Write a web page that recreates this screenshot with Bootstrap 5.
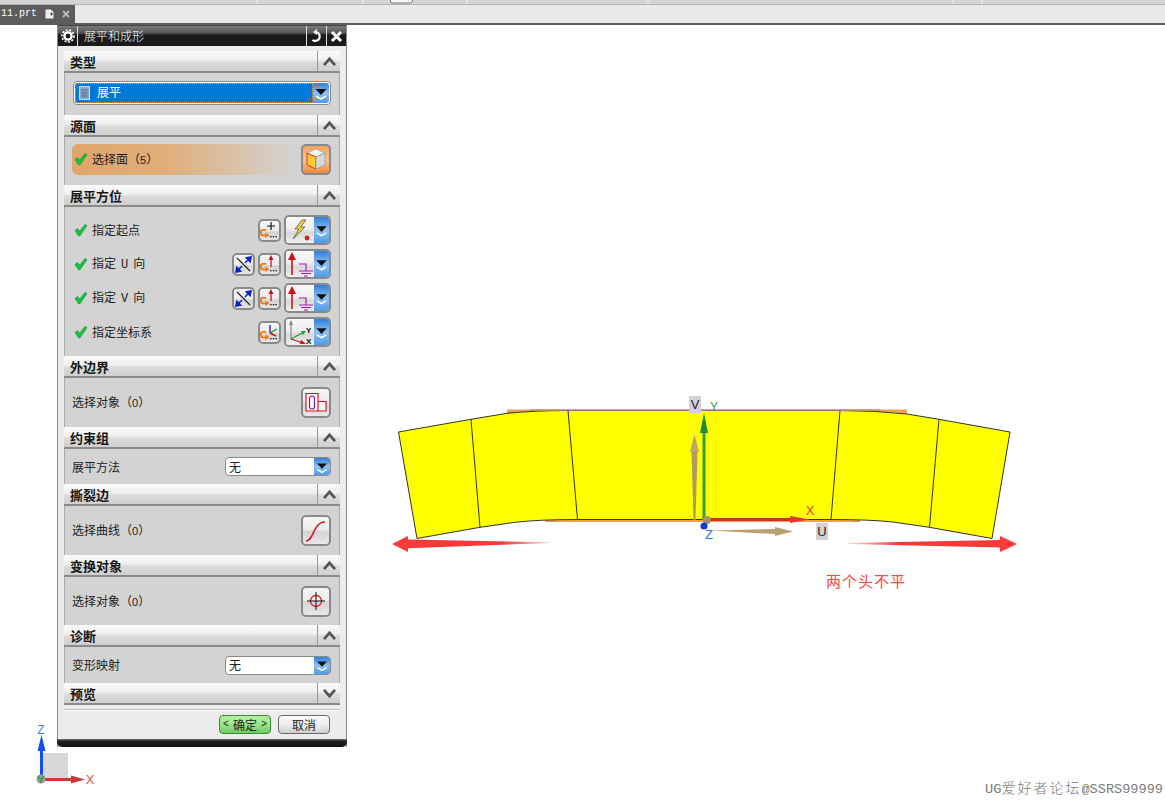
<!DOCTYPE html>
<html lang="zh-CN">
<head>
<meta charset="UTF-8">
<meta name="viewport" content="width=device-width, initial-scale=1.0">
<title>展平和成形</title>
<link href="https://cdn.jsdelivr.net/npm/bootstrap@5.3.3/dist/css/bootstrap.min.css" rel="stylesheet">
<style>
html, body { height: 801px; overflow: hidden; }
body { background: #fff; font-family: "Noto Sans CJK SC", "Liberation Sans", sans-serif; font-size: 12px; line-height: 1; color: #222; position: relative; }
.asc { font-family: "Liberation Mono", monospace; font-size: 10px; }
.asc-axis { font-family: "Liberation Mono", monospace; font-size: 12px; margin: 0 5px; }
.dig { font-family: "Liberation Sans", sans-serif; font-size: 11px; }

/* top strip and file tab */
.top-strip { height: 5px; background: #d4d4d4; border-bottom: 1px solid #b4b4b4; }
.top-strip svg { display: block; }
.tab-bar { height: 20px; background: #e9e9e9; border-bottom: 2px solid #5c5c5c; }
.file-tab { width: 75px; height: 18px; background: #5c5c5c; color: #fff; font-family: "Liberation Mono", monospace; font-size: 10px; padding-left: 1px; }

/* model canvas */
.model-view { position: absolute; left: 0; top: 0; width: 1165px; height: 801px; }
.watermark { position: absolute; right: 2px; bottom: 4px; color: #7a7a7a; font-family: "Liberation Mono", monospace; font-size: 13.6px; }
.watermark span { font-family: "Noto Sans CJK SC", sans-serif; font-size: 14px; letter-spacing: 2px; font-weight: 300; }

/* dialog */
.ug-dialog { position: absolute; left: 57px; top: 25px; width: 290px; height: 722px; background: #ececec; border-left: 1px solid #8c8c8c; border-right: 1px solid #8c8c8c; }
.ug-title { height: 21px; background: linear-gradient(#7a7a7a 0, #555 35%, #1a1a1a 45%, #1a1a1a 100%); color: #fff; border-top: 1px solid #444; }
.ug-title-text { padding-left: 6px; font-size: 12px; font-weight: 300; }
.ug-tb { width: 20px; height: 20px; border-right: 1px solid #ddd; }
.ug-tb-r { border-left: 1px solid #ddd; border-right: 0; }
.ug-sections { padding: 5px 6px 0 6px; }
.sec-head { height: 22px; background: linear-gradient(#fafafa 0, #f0f0f0 45%, #dcdcdc 55%, #cfcfcf 100%); border-bottom: 2px solid #8a8a8a; font-size: 13px; font-weight: 700; color: #161616; padding-left: 6px; }
.sec-arrow { width: 23px; height: 20px; border-left: 1px solid #999; }
.sec-body { background: #d3d3d3; border-left: 1px solid #aaa; border-right: 1px solid #aaa; padding: 0 8px 0 7px; }
.h-42 { height: 42px; } .h-48 { height: 48px; } .h-49 { height: 49px; } .h-35 { height: 35px; } .h-36 { height: 36px; } .h-149 { height: 149px; }
.sec-stack { padding-top: 8px; padding-left: 9px; }
.ori-row { height: 34px; padding-bottom: 4px; }
.ori-label { padding-left: 4px; }

/* combos and tool buttons */
.combo-type { width: 258px; height: 24px; margin: 0 0 2px 1px; background: #fff; border: 1px solid #8a8a8a; border-radius: 4px; padding: 1px; }
.combo-sel { flex: 1; height: 100%; background: #0078d7; outline: 1px dotted #e8a050; outline-offset: -1px; color: #fff; padding-left: 4px; gap: 7px; }
.combo-sel span { padding-bottom: 3px; }
.combo-btn { width: 16px; height: 100%; background: linear-gradient(#2f7fdc 0, #8fc0f0 50%, #4f9ae6 100%); border-radius: 0 3px 3px 0; }
.combo-small { width: 106px; height: 19px; background: #fff; border: 1px solid #8a8a8a; border-radius: 4px; padding-left: 3px; }
.combo-small .combo-btn { margin-left: auto; }
.pick-row { height: 31px; flex: 1; margin-right: 1px; border-radius: 6px; padding-left: 2px; gap: 4px; background: linear-gradient(90deg, #e0a66b 0, #e0ad7a 40%, #d8c4ac 75%, #d3d3d3 97%); }
.tool-big { width: 30px; height: 31px; padding: 0; border: 2px solid #8a8a8a; border-radius: 5px; background: linear-gradient(#f4f4f4 0, #ededed 45%, #d4d4d4 55%, #e8e8e8 100%); }
.tool-org { background: linear-gradient(#f3a25a 0, #f8c490 50%, #f08a3c 100%); }
.tool-sm { width: 23px; height: 23px; padding: 0; border: 2px solid #8a8a8a; border-radius: 5px; background: linear-gradient(#f6f6f6 0, #ececec 50%, #d2d2d2 60%, #e6e6e6 100%); margin-right: 3px; }
.split-btn { width: 47px; height: 30px; border: 2px solid #8a8a8a; border-radius: 5px; overflow: hidden; }
.split-face { width: 30px; height: 100%; background: linear-gradient(#f8f8f8 0, #efefef 45%, #d8d8d8 60%, #efefef 100%); }
.split-btn .combo-btn { width: 15px; border-radius: 0; }

/* footer */
.ug-rule { height: 2px; margin: 4px 0 0 0; background: #fff; border-top: 1px solid #bdbdbd; }
.ug-actions { padding: 4px 10px 0 0; gap: 7px; }
.act-btn { width: 52px; height: 19px; padding: 0 3px; font-size: 12px; line-height: 1; color: #222; border: 1px solid #6a6a6a; border-radius: 4px; background: linear-gradient(#f8f8f8 0, #eee 50%, #cfcfcf 100%); }
.act-ok { background: linear-gradient(#b6f0a0 0, #9ae688 50%, #6ccc60 100%); border-color: #3d8a3d; }
.ug-foot { position: absolute; left: -1px; right: -1px; bottom: 0; height: 8px; background: linear-gradient(#777 0, #222 25%, #111 100%); border-radius: 0 0 5px 5px; }
</style>
</head>
<body>

<svg width="0" height="0" class="position-absolute">
  <defs>
    <symbol id="i-up" viewBox="0 0 16 12"><polyline points="2,10 8,3 14,10" fill="none" stroke="#555" stroke-width="3"/></symbol>
    <symbol id="i-down" viewBox="0 0 16 12"><polyline points="2,2 8,9 14,2" fill="none" stroke="#555" stroke-width="3"/></symbol>
    <symbol id="i-drop" viewBox="0 0 16 20"><polygon points="2.500,6 13.500,6 8,12" fill="#111"/><polyline points="3,13 8,16 13,13" fill="none" stroke="#fff" stroke-width="1.500"/></symbol>
    <symbol id="i-check" viewBox="0 0 14 14"><path d="M1 7.500 L3.600 5.600 L5.600 8.200 L11 1.500 L13 2.600 L6 12.800 L4.600 12.800 Z" fill="#16c43c" stroke="#0c8a2a" stroke-width=".6"/></symbol>
    <symbol id="i-arrow-orange" viewBox="0 0 11 10"><path d="M7 1 H3 Q1 1 1 3 V5 Q1 7 3 7 H6.500" fill="none" stroke="#f07a10" stroke-width="2"/><polygon points="6,4 10.500,7 6,10" fill="#f07a10"/></symbol>
    <symbol id="i-dots" viewBox="0 0 10 3"><rect x="0" y="0" width="2" height="2" fill="#111"/><rect x="4" y="0" width="2" height="2" fill="#111"/><rect x="8" y="0" width="2" height="2" fill="#111"/></symbol>
    <symbol id="i-flip" viewBox="0 0 20 20"><line x1="3" y1="3" x2="17" y2="17" stroke="#111" stroke-width="1.300"/><path d="M11.500 8.500 L15 5 M13 3 L18 2 L17 7 Z M8.500 11.500 L5 15 M7 17 L2 18 L3 13 Z" fill="#0a22c8" stroke="#0a22c8" stroke-width="1.600"/></symbol>
    <symbol id="i-vec" viewBox="0 0 28 26"><line x1="6" y1="7" x2="6" y2="24" stroke="#c8141e" stroke-width="1.600"/><polygon points="6,1 2,9 10,9" fill="#c8141e"/><path d="M13 13 H20 V20 M13 20 H27 M15 22.500 H25 M18 25 H22" fill="none" stroke="#b418b4" stroke-width="1.200"/></symbol>
    <symbol id="i-csys" viewBox="0 0 28 26"><line x1="5" y1="20" x2="5" y2="4" stroke="#888" stroke-width="1.200"/><polygon points="5,1 3,6 7,6" fill="#888"/><line x1="5" y1="20" x2="18" y2="13" stroke="#1aa02a" stroke-width="1.200"/><polygon points="20,12 15,12 17,16" fill="#1aa02a"/><line x1="5" y1="20" x2="17" y2="24" stroke="#c8141e" stroke-width="1.200"/><polygon points="20,25 15,21 14,25" fill="#c8141e"/></symbol>
  </defs>
</svg>

<!-- canvas -->
<svg class="model-view" viewBox="0 0 1165 801">
  <defs>
    <linearGradient id="fadeL" x1="0" x2="1"><stop offset="0" stop-color="#f83a3a"/><stop offset=".7" stop-color="#f83a3a"/><stop offset="1" stop-color="#f83a3a" stop-opacity=".2"/></linearGradient>
    <linearGradient id="fadeR" x1="1" x2="0"><stop offset="0" stop-color="#f83a3a"/><stop offset=".7" stop-color="#f83a3a"/><stop offset="1" stop-color="#f83a3a" stop-opacity=".2"/></linearGradient>
  </defs>
  <path d="M507 409.500 H907 V413.500 L880 411.500 H530 L507 413.500 Z" fill="#f0a050"/>
  <rect x="545" y="520" width="315" height="2" fill="#f0a050"/>
  <path d="M398.500 432 L471 419.300 L507 413.300 Q535 410.500 568 410.500 L840 410.500 Q875 410.500 907 414 L939 419.300 L1010 432 L992 538.500 L929.500 527.300 L893 522 Q870 519.500 831 519.500 L577.500 519.500 Q540 519.500 515 522.300 L480 527.300 L417 538.500 Z" fill="#ffff00" stroke="#333" stroke-width="1"/>
  <path d="M530 410 H880" stroke="#c09868" stroke-width="1.500"/>
  <path d="M471 419.300 L480 527.300 M568 410.500 L577.500 519.500 M840 410.500 L831 519.500 M939 419.300 L929.500 527.300" stroke="#333" stroke-width="1" fill="none"/>

  <polygon points="392,544 408,536 408,539.500 550,542.300 550,543 408,548.300 408,552" fill="url(#fadeL)"/>
  <polygon points="1017,544 1000,536 1000,540 848,543 848,544 1000,547.500 1000,552" fill="url(#fadeR)"/>
  <text x="826" y="587" font-size="15" letter-spacing="1" fill="#f84848" font-family="Noto Sans CJK SC, sans-serif">两个头不平</text>

  <!-- triad on the sheet -->
  <polygon points="693.500,520 691.500,452 697.500,452 695.500,520" fill="#b09a60"/>
  <polygon points="694.500,434 690,452 699,452" fill="#c0a468"/>
  <rect x="702.500" y="431" width="3" height="89" fill="#30a040"/>
  <polygon points="704,413 700,433 708,433" fill="#1f8a34"/>
  <rect x="705" y="518" width="88" height="3" fill="#d03028"/>
  <polygon points="810,519.500 790,516 790,523" fill="#e03838"/>
  <polygon points="710,530.500 775,529 775,527 793,531.500 775,536 775,534" fill="#b8a070"/>
  <circle cx="707" cy="520" r="4" fill="#a89060"/>
  <circle cx="704" cy="526" r="3.500" fill="#0a3ce0"/>
  <rect x="689" y="396" width="12" height="17" fill="#d2d2d2"/>
  <text x="695" y="409" font-size="13" text-anchor="middle" fill="#222" font-family="Liberation Sans, sans-serif">V</text>
  <text x="714" y="411" font-size="12" text-anchor="middle" fill="#30a040" font-family="Liberation Sans, sans-serif">Y</text>
  <text x="810" y="515" font-size="13" text-anchor="middle" fill="#e04040" font-family="Liberation Sans, sans-serif">X</text>
  <text x="709" y="539" font-size="13" text-anchor="middle" fill="#2a6cf0" font-family="Liberation Sans, sans-serif">Z</text>
  <rect x="816" y="523" width="12" height="17" fill="#d2d2d2"/>
  <text x="822" y="536" font-size="13" text-anchor="middle" fill="#222" font-family="Liberation Sans, sans-serif">U</text>

  <!-- absolute csys, bottom left -->
  <rect x="41" y="753" width="27" height="27" fill="#d8d8d8"/>
  <rect x="40" y="750" width="3" height="28" fill="#1450f0"/>
  <polygon points="41.500,735 37.500,751 45.500,751" fill="#1450f0"/>
  <rect x="42" y="778" width="32" height="3" fill="#d03838"/>
  <polygon points="85,779.500 71,775.500 71,783.500" fill="#d03838"/>
  <circle cx="41" cy="779" r="4.500" fill="#9a9a9a"/>
  <path d="M38 776 L41 780 L44 776 M41 780 V783" stroke="#30a040" stroke-width="1.400" fill="none"/>
  <text x="41" y="734" font-size="12" text-anchor="middle" fill="#4a7cf0" font-family="Liberation Sans, sans-serif">Z</text>
  <text x="90" y="784" font-size="13" text-anchor="middle" fill="#e05050" font-family="Liberation Sans, sans-serif">X</text>
</svg>

<div class="watermark">UG<span>爱好者论坛</span>@SSRS99999</div>

<div class="top-strip">
  <svg width="1165" height="4"><path d="M257 0V4M363 0V4M412 0V4M467 0V4M648 0V4M953 0V4M982 0V4" stroke="#f2f2f2"/><rect x="390.500" y="-3" width="22" height="6" rx="2" fill="#f6f6f6" stroke="#777"/></svg>
</div>
<div class="tab-bar">
  <div class="file-tab d-flex align-items-center">
    <span>11.prt</span>
    <svg class="ms-2" width="9" height="10" viewBox="0 0 9 10"><path d="M0.500 0.500H6L8.500 3V9.500H0.500Z" fill="#eee"/><path d="M5 5H8M6.500 3.500V6.500" stroke="#444"/></svg>
    <svg class="ms-2" width="8" height="8" viewBox="0 0 8 8"><path d="M1 1L7 7M7 1L1 7" stroke="#b8b8b8" stroke-width="2"/></svg>
  </div>
</div>

<!-- dialog window -->
<div class="ug-dialog">
  <div class="ug-title d-flex align-items-center">
    <div class="ug-tb d-flex align-items-center justify-content-center">
      <svg width="14" height="14" viewBox="0 0 14 14"><circle cx="7" cy="7" r="6" fill="none" stroke="#fff" stroke-width="1.600" stroke-dasharray="2 1.600"/><circle cx="7" cy="7" r="3.600" fill="none" stroke="#fff" stroke-width="2.400"/></svg>
    </div>
    <div class="ug-title-text flex-grow-1">展平和成形</div>
    <div class="ug-tb ug-tb-r d-flex align-items-center justify-content-center">
      <svg width="14" height="14" viewBox="0 0 14 14"><path d="M6 3 A4.500 4.500 0 1 1 2.500 11" fill="none" stroke="#fff" stroke-width="2.200"/><polygon points="7,0 7,6 3,3" fill="#fff"/></svg>
    </div>
    <div class="ug-tb ug-tb-r d-flex align-items-center justify-content-center">
      <svg width="13" height="13" viewBox="0 0 13 13"><path d="M2 2L11 11M11 2L2 11" stroke="#fff" stroke-width="3"/></svg>
    </div>
  </div>

  <div class="ug-sections">
    <div class="sec-head d-flex align-items-center justify-content-between"><span>类型</span><span class="sec-arrow d-flex align-items-center justify-content-center"><svg width="15" height="11"><use href="#i-up"/></svg></span></div>
    <div class="sec-body h-42 d-flex align-items-center">
      <div class="combo-type d-flex align-items-center">
        <div class="combo-sel d-flex align-items-center">
          <svg width="11" height="14" viewBox="0 0 11 14"><rect x=".5" y=".5" width="10" height="13" fill="#8fa6c4" stroke="#cfd8e4"/><path d="M2 4H9M2 7H9M2 10H9M4 3V12M7 3V12" stroke="#5e7696"/></svg>
          <span>展平</span>
        </div>
        <div class="combo-btn d-flex align-items-center justify-content-center"><svg width="16" height="20"><use href="#i-drop"/></svg></div>
      </div>
    </div>

    <div class="sec-head d-flex align-items-center justify-content-between"><span>源面</span><span class="sec-arrow d-flex align-items-center justify-content-center"><svg width="15" height="11"><use href="#i-up"/></svg></span></div>
    <div class="sec-body h-48 d-flex align-items-center">
      <div class="pick-row d-flex align-items-center mb-1">
        <svg width="14" height="14"><use href="#i-check"/></svg>
        <span>选择面（<span class="dig">5</span>）</span>
      </div>
      <button type="button" class="btn tool-big tool-org d-flex align-items-center justify-content-center mb-1">
        <svg width="24" height="24" viewBox="0 0 24 24"><polygon points="12,2 21,6 12,10 3,6" fill="#f4f4f4" stroke="#aaa" stroke-width=".8"/><polygon points="3,6 12,10 12,22 3,18" fill="#ffcc33" stroke="#e83020" stroke-width="1"/><polygon points="12,10 21,6 21,18 12,22" fill="#d8d8d8" stroke="#999" stroke-width=".8"/></svg>
      </button>
    </div>

    <div class="sec-head d-flex align-items-center justify-content-between"><span>展平方位</span><span class="sec-arrow d-flex align-items-center justify-content-center"><svg width="15" height="11"><use href="#i-up"/></svg></span></div>
    <div class="sec-body h-149 sec-stack">
      <div class="ori-row d-flex align-items-center">
        <svg width="14" height="14"><use href="#i-check"/></svg><span class="ori-label me-auto">指定起点</span>
        <button type="button" class="btn tool-sm d-flex align-items-center justify-content-center">
          <svg width="19" height="19" viewBox="0 0 19 19"><path d="M11 1V9M7 5H15" stroke="#111" stroke-width="1.200"/><use href="#i-arrow-orange" x="0" y="8" width="10" height="9"/><use href="#i-dots" x="9" y="15" width="9" height="2"/></svg>
        </button>
        <div class="split-btn d-flex">
          <div class="split-face d-flex align-items-center justify-content-center">
            <svg width="24" height="24" viewBox="0 0 24 24"><path d="M14 2 L7 11 L11 11 L5 21 L17 9 L12.500 9 L18 2 Z" fill="#f4d030" stroke="#555" stroke-width=".8"/><circle cx="19" cy="20" r="2.400" fill="#d81e1e"/></svg>
          </div>
          <div class="combo-btn d-flex align-items-center justify-content-center"><svg width="15" height="20"><use href="#i-drop"/></svg></div>
        </div>
      </div>
      <div class="ori-row d-flex align-items-center">
        <svg width="14" height="14"><use href="#i-check"/></svg><span class="ori-label me-auto">指定<span class="asc-axis">U</span>向</span>
        <button type="button" class="btn tool-sm d-flex align-items-center justify-content-center"><svg width="19" height="19"><use href="#i-flip"/></svg></button>
        <button type="button" class="btn tool-sm d-flex align-items-center justify-content-center">
          <svg width="19" height="19" viewBox="0 0 19 19"><path d="M11 4V12" stroke="#c8141e" stroke-width="1.300"/><polygon points="11,0 8.500,5 13.500,5" fill="#c8141e"/><use href="#i-arrow-orange" x="0" y="8" width="10" height="9"/><use href="#i-dots" x="9" y="15" width="9" height="2"/></svg>
        </button>
        <div class="split-btn d-flex">
          <div class="split-face d-flex align-items-center justify-content-center"><svg width="28" height="26"><use href="#i-vec"/></svg></div>
          <div class="combo-btn d-flex align-items-center justify-content-center"><svg width="15" height="20"><use href="#i-drop"/></svg></div>
        </div>
      </div>
      <div class="ori-row d-flex align-items-center">
        <svg width="14" height="14"><use href="#i-check"/></svg><span class="ori-label me-auto">指定<span class="asc-axis">V</span>向</span>
        <button type="button" class="btn tool-sm d-flex align-items-center justify-content-center"><svg width="19" height="19"><use href="#i-flip"/></svg></button>
        <button type="button" class="btn tool-sm d-flex align-items-center justify-content-center">
          <svg width="19" height="19" viewBox="0 0 19 19"><path d="M11 4V12" stroke="#c8141e" stroke-width="1.300"/><polygon points="11,0 8.500,5 13.500,5" fill="#c8141e"/><use href="#i-arrow-orange" x="0" y="8" width="10" height="9"/><use href="#i-dots" x="9" y="15" width="9" height="2"/></svg>
        </button>
        <div class="split-btn d-flex">
          <div class="split-face d-flex align-items-center justify-content-center"><svg width="28" height="26"><use href="#i-vec"/></svg></div>
          <div class="combo-btn d-flex align-items-center justify-content-center"><svg width="15" height="20"><use href="#i-drop"/></svg></div>
        </div>
      </div>
      <div class="ori-row d-flex align-items-center">
        <svg width="14" height="14"><use href="#i-check"/></svg><span class="ori-label me-auto">指定坐标系</span>
        <button type="button" class="btn tool-sm d-flex align-items-center justify-content-center">
          <svg width="19" height="19" viewBox="0 0 19 19"><path d="M10 10V2" stroke="#1430d0" stroke-width="1.400"/><path d="M10 10L17 6" stroke="#1aa02a" stroke-width="1.400"/><path d="M10 10L16 13" stroke="#c8141e" stroke-width="1.400"/><use href="#i-arrow-orange" x="0" y="8" width="10" height="9"/><use href="#i-dots" x="9" y="15" width="9" height="2"/></svg>
        </button>
        <div class="split-btn d-flex">
          <div class="split-face d-flex align-items-center justify-content-center">
            <svg width="28" height="26" viewBox="0 0 28 26"><use href="#i-csys"/><text x="20" y="14" font-size="8" font-weight="700" fill="#111" font-family="Liberation Sans, sans-serif">Y</text><text x="20" y="25" font-size="8" font-weight="700" fill="#111" font-family="Liberation Sans, sans-serif">X</text></svg>
          </div>
          <div class="combo-btn d-flex align-items-center justify-content-center"><svg width="15" height="20"><use href="#i-drop"/></svg></div>
        </div>
      </div>
    </div>

    <div class="sec-head d-flex align-items-center justify-content-between"><span>外边界</span><span class="sec-arrow d-flex align-items-center justify-content-center"><svg width="15" height="11"><use href="#i-up"/></svg></span></div>
    <div class="sec-body h-49 d-flex align-items-center justify-content-between">
      <span>选择对象（<span class="dig">0</span>）</span>
      <button type="button" class="btn tool-big d-flex align-items-center justify-content-center">
        <svg width="24" height="24" viewBox="0 0 24 24"><path d="M2 2.500H14V20H2ZM14 10.500H22V20H14" fill="#fff" stroke="#e01020" stroke-width="1.200"/><rect x="5.500" y="5" width="5" height="13" rx="2.500" fill="none" stroke="#6a1fa0" stroke-width="1.200"/></svg>
      </button>
    </div>

    <div class="sec-head d-flex align-items-center justify-content-between"><span>约束组</span><span class="sec-arrow d-flex align-items-center justify-content-center"><svg width="15" height="11"><use href="#i-up"/></svg></span></div>
    <div class="sec-body h-35 d-flex align-items-center justify-content-between">
      <span>展平方法</span>
      <div class="combo-small d-flex align-items-center"><span>无</span><div class="combo-btn d-flex align-items-center justify-content-center"><svg width="16" height="18"><use href="#i-drop"/></svg></div></div>
    </div>

    <div class="sec-head d-flex align-items-center justify-content-between"><span>撕裂边</span><span class="sec-arrow d-flex align-items-center justify-content-center"><svg width="15" height="11"><use href="#i-up"/></svg></span></div>
    <div class="sec-body h-49 d-flex align-items-center justify-content-between">
      <span>选择曲线（<span class="dig">0</span>）</span>
      <button type="button" class="btn tool-big d-flex align-items-center justify-content-center">
        <svg width="24" height="24" viewBox="0 0 24 24"><path d="M2 22 C10 22 9 3 21 3" fill="none" stroke="#c8202c" stroke-width="1.600"/></svg>
      </button>
    </div>

    <div class="sec-head d-flex align-items-center justify-content-between"><span>变换对象</span><span class="sec-arrow d-flex align-items-center justify-content-center"><svg width="15" height="11"><use href="#i-up"/></svg></span></div>
    <div class="sec-body h-48 d-flex align-items-center justify-content-between">
      <span>选择对象（<span class="dig">0</span>）</span>
      <button type="button" class="btn tool-big d-flex align-items-center justify-content-center">
        <svg width="22" height="22" viewBox="0 0 22 22"><circle cx="11" cy="11" r="5.500" fill="none" stroke="#e01020" stroke-width="1.300"/><path d="M11 2V20M2 11H20" stroke="#111" stroke-width="1"/></svg>
      </button>
    </div>

    <div class="sec-head d-flex align-items-center justify-content-between"><span>诊断</span><span class="sec-arrow d-flex align-items-center justify-content-center"><svg width="15" height="11"><use href="#i-up"/></svg></span></div>
    <div class="sec-body h-36 d-flex align-items-center justify-content-between">
      <span>变形映射</span>
      <div class="combo-small d-flex align-items-center"><span>无</span><div class="combo-btn d-flex align-items-center justify-content-center"><svg width="16" height="18"><use href="#i-drop"/></svg></div></div>
    </div>

    <div class="sec-head d-flex align-items-center justify-content-between"><span>预览</span><span class="sec-arrow d-flex align-items-center justify-content-center"><svg width="15" height="11"><use href="#i-down"/></svg></span></div>
    <div class="ug-rule"></div>
    <div class="ug-actions d-flex justify-content-end">
      <button type="button" class="btn act-btn act-ok d-flex align-items-center justify-content-between"><span class="asc">&lt;</span><span>确定</span><span class="asc">&gt;</span></button>
      <button type="button" class="btn act-btn">取消</button>
    </div>
  </div>
  <div class="ug-foot"></div>
</div>

<script src="https://cdn.jsdelivr.net/npm/bootstrap@5.3.3/dist/js/bootstrap.bundle.min.js"></script>
</body>
</html>
